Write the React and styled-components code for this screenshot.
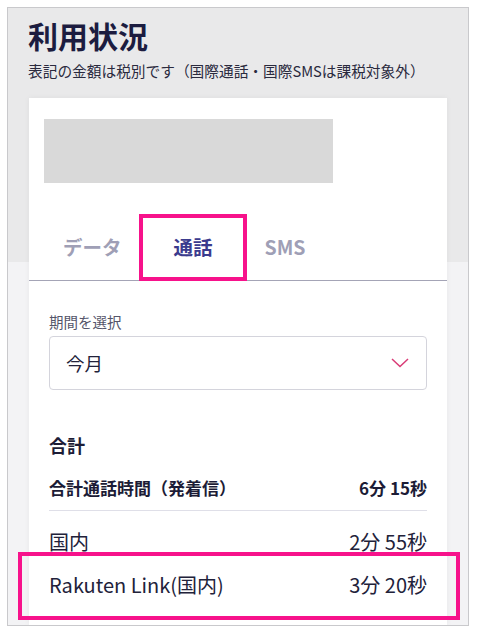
import React from "react";
import styled, { createGlobalStyle } from "styled-components";

const Global = createGlobalStyle`
  html, body { margin: 0; padding: 0; background: #ffffff; }
  body { font-family: "Noto Sans CJK JP", "Noto Sans", sans-serif; color: #22223a; }
  * { box-sizing: border-box; }
`;

const Frame = styled.div`
  margin: 7px 0 0 7px;
  width: 462px;
  height: 619px;
  border: 1px solid #c9c9cc;
  overflow: hidden;
  display: flex;
  flex-direction: column;
  background: linear-gradient(to bottom, #e9e9ea 0, #e9e9ea 254px, #f3f3f5 254px);
`;

const Header = styled.header`
  padding: 9px 20px 0 20px;
`;

const Title = styled.h1`
  margin: 0;
  font-size: 30px;
  line-height: 36px;
  font-weight: 700;
  color: #1c1c40;
`;

const Subtitle = styled.p`
  margin: 8px 0 0 0;
  font-size: 14.7px;
  line-height: 20px;
  color: #2a2a3e;
  white-space: nowrap;
`;

const Card = styled.section`
  flex: 1;
  margin: 17px 21px 0 21px;
  background: #ffffff;
  box-shadow: 0 0 6px rgba(0, 0, 0, 0.05);
  padding-top: 21px;
`;

const Placeholder = styled.div`
  margin-left: 15px;
  width: 289px;
  height: 64px;
  background: #d9d9d9;
`;

const TabBar = styled.nav`
  margin-top: 39px;
  display: flex;
  gap: 22px;
  padding-left: 19px;
  border-bottom: 1px solid #a4a4b6;
`;

const Tab = styled.div`
  position: relative;
  padding: 12px 15px 17px 15px;
  font-size: 19.5px;
  line-height: 26px;
  font-weight: 700;
  color: ${(p) => (p.$active ? "#3b3b8e" : "#9f9fb6")};
  border-bottom: 3px solid ${(p) => (p.$active ? "#4848a2" : "transparent")};
`;

const Highlight = styled.div`
  position: absolute;
  top: ${(p) => p.$t}px;
  bottom: ${(p) => p.$b}px;
  left: ${(p) => p.$l}px;
  right: ${(p) => p.$r}px;
  border: 4px solid #f7128b;
  pointer-events: none;
`;

const Body = styled.div`
  padding: 0 20px;
`;

const FieldLabel = styled.div`
  margin-top: 32px;
  font-size: 14.5px;
  line-height: 18px;
  color: #55556a;
`;

const Select = styled.div`
  margin-top: 5px;
  height: 54px;
  border: 1px solid #d4d4dc;
  border-radius: 4px;
  display: flex;
  align-items: center;
  justify-content: space-between;
  padding: 0 17px 0 16px;
  font-size: 18.5px;
  color: #22223a;
`;

const SectionTitle = styled.h2`
  margin: 42px 0 0 0;
  font-size: 18px;
  line-height: 26px;
  font-weight: 700;
  color: #1c1c36;
`;

const TotalRow = styled.div`
  margin-top: 18px;
  display: flex;
  justify-content: space-between;
  font-size: 17px;
  line-height: 24px;
  font-weight: 700;
  color: #1c1c36;
  padding-bottom: 10px;
  border-bottom: 1px solid #dfdfe8;
`;

const List = styled.div`
  padding-top: 9px;
`;

const Row = styled.div`
  position: relative;
  display: flex;
  justify-content: space-between;
  padding: 9px 0 8px 0;
  font-size: 20px;
  line-height: 26px;
  color: #22223a;
`;

const Chevron = () => (
  <svg width="18" height="10" viewBox="0 0 18 10" fill="none">
    <polyline points="1,1 9,8.5 17,1" stroke="#d93b76" strokeWidth="1.5" fill="none" />
  </svg>
);

export default function App() {
  return (
    <>
      <Global />
      <Frame>
        <Header>
          <Title>利用状況</Title>
          <Subtitle>表記の金額は税別です（国際通話・国際SMSは課税対象外）</Subtitle>
        </Header>
        <Card>
          <Placeholder />
          <TabBar>
            <Tab>データ</Tab>
            <Tab $active>
              通話
              <Highlight $t={-8} $b={-4} $l={-20} $r={-19} />
            </Tab>
            <Tab>SMS</Tab>
          </TabBar>
          <Body>
            <FieldLabel>期間を選択</FieldLabel>
            <Select>
              <span>今月</span>
              <Chevron />
            </Select>
            <SectionTitle>合計</SectionTitle>
            <TotalRow>
              <span>合計通話時間（発着信）</span>
              <span>6分 15秒</span>
            </TotalRow>
            <List>
              <Row>
                <span>国内</span>
                <span>2分 55秒</span>
              </Row>
              <Row>
                <span>Rakuten Link(国内)</span>
                <span>3分 20秒</span>
                <Highlight $t={-11} $b={-14} $l={-31} $r={-33} />
              </Row>
            </List>
          </Body>
        </Card>
      </Frame>
    </>
  );
}
